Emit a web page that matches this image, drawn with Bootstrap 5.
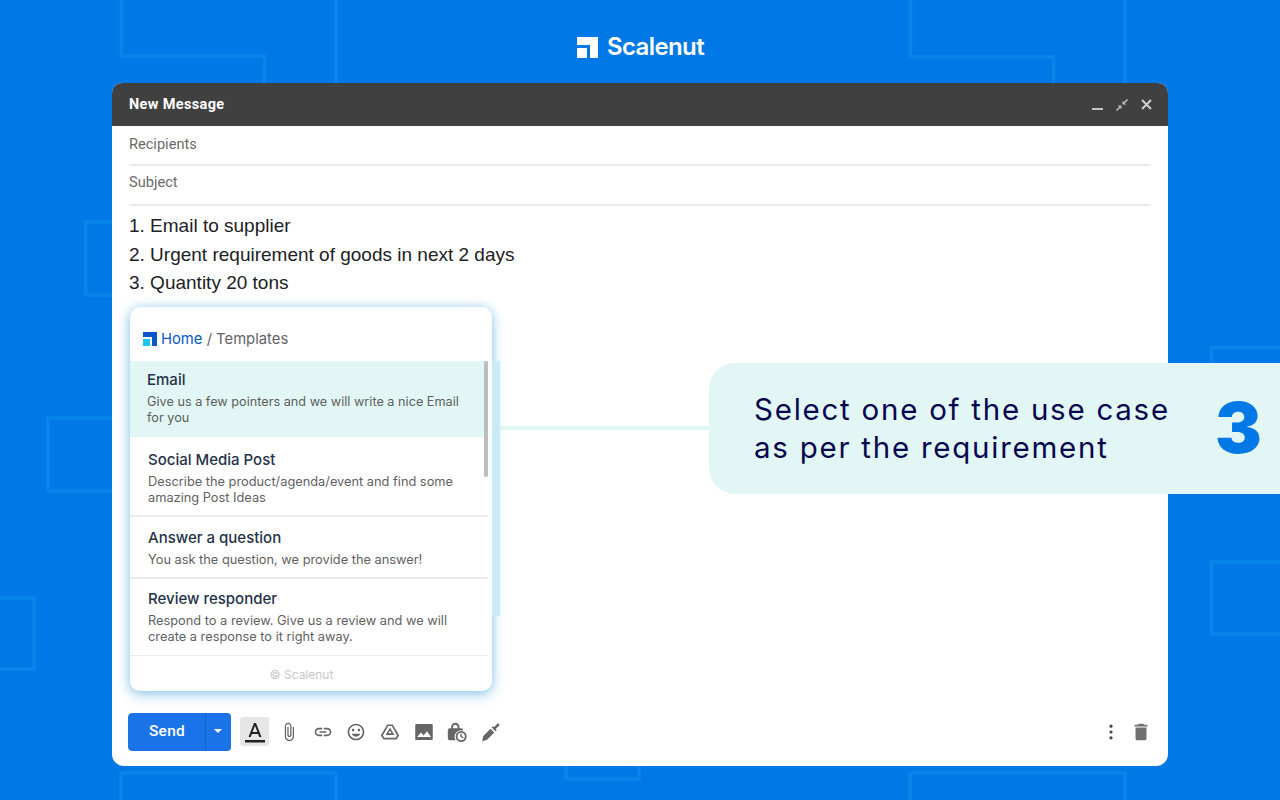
<!DOCTYPE html>
<html lang="en">
<head>
<meta charset="utf-8">
<title>Scalenut</title>
<link href="https://cdn.jsdelivr.net/npm/bootstrap@5.3.0/dist/css/bootstrap.min.css" rel="stylesheet">
<style>
html,body{height:100%}
body{width:1280px;height:800px;overflow:hidden;background:#0078e6;position:relative;font-family:"Roboto",sans-serif}
.bg-lines{position:absolute;left:0;top:0;width:1280px;height:800px;z-index:0}
.bg-lines path,.bg-lines rect{fill:none;stroke:#0885e9;stroke-width:3.5}
.brand-bar{height:83px;position:relative;z-index:1;padding:11px 0 0 1px}
.brand-name{font-family:"Inter",sans-serif;font-weight:600;font-size:24px;line-height:1;color:#fff;letter-spacing:-.6px;margin-left:9px}
.mail-win{position:relative;z-index:1;width:1056px;height:683px;margin:0 auto;background:#fff;border-radius:10px 10px 12px 12px;overflow:hidden}
.mail-head{height:43px;background:#404040;padding:0 15px 0 17px;color:#fff;font-weight:700;font-size:14.5px;letter-spacing:.35px}
.mail-field{margin:0 17px;font-size:14.600px;color:#6a6a6a;border-bottom:2px solid #ebebeb}
.f-one{height:40px;padding-top:8px}
.f-two{height:40px;padding-top:6px}
.mail-body{margin:6px 0 0 17px;font-family:"Liberation Sans",sans-serif;font-size:19px;line-height:28.5px;color:#202124}
.tpl-pop{position:relative;width:362px;height:384px;margin:9px 0 0 18px;background:#fff;border-radius:10px;box-shadow:0 4px 14px rgba(40,150,215,.42),0 0 8px rgba(60,170,225,.3);font-family:"Inter",sans-serif}
.tpl-pop::after{content:"";position:absolute;left:362px;top:54px;width:8px;height:255px;background:#c9eaf7}
.tpl-crumb{height:54px;padding:11px 0 0 13px;font-size:14.8px;line-height:29px;color:#5f6368}
.tpl-crumb a{color:#0a57c9;text-decoration:none}
.tpl-list{position:relative;width:358px;--bs-list-group-border-width:0;--bs-list-group-border-radius:0}
.tpl-list .list-group-item{padding:10px 19px 0 18px;border:0;border-bottom:2px solid #ebebeb;color:#5f5f5f;font-size:12.8px;line-height:16px;background:transparent}
.tpl-list .list-group-item.tpl-on{padding:9px 19px 0 17px;background:#e1f6f5;border-bottom:0;height:76px;font-size:12.7px}
.tpl-list h6{font-family:"Inter",sans-serif;font-size:15px;font-weight:500;line-height:20px;color:#243249;margin:0 0 4px}
.tpl-list .list-group-item.tpl-h1{height:80px;padding-top:13px}
.tpl-list .list-group-item.tpl-h2{height:62px;padding-top:11px}
.tpl-list .list-group-item.tpl-h3{height:77px;border-bottom-width:1px}
.tpl-bar{position:absolute;right:0;top:0;width:4px;height:116px;background:#b9bfc1;border-radius:2px}
.tpl-foot{font-size:12px;color:#c8c8c8;height:35px;line-height:37px;padding-right:19px}
.mail-tools{margin-top:22px;padding:0 16px 0 16px}
.send-grp .btn{--bs-btn-bg:#1a73e8;--bs-btn-border-color:#1a73e8;--bs-btn-hover-bg:#1a73e8;height:38px;color:#fff;border-radius:4px;font-weight:500;font-size:15.500px;letter-spacing:.3px;padding:0}
.send-main{width:78px}
.send-drop{width:26px;border-left-color:#1660c4!important}
.send-drop i{display:inline-block;border:4px solid transparent;border-top:4.5px solid #fff;border-bottom:0;vertical-align:middle;margin-top:-2px}
.t-ico{width:20px;height:20px;fill:#666;display:block}
.t-box{width:29px;height:29px;margin:0 0 0 9px;background:#e6e6e6;border-radius:3px}
.t-box svg{width:24px;height:24px;fill:#222}
.t-gap{gap:13.7px;margin-left:10px}
.pop-note{position:absolute;z-index:2;left:709px;top:363px;width:571px;height:131px;background:#e1f6f5;border-radius:26px 0 0 26px;padding:0 0 2px 45px}
.pop-note::before{content:"";position:absolute;left:-209px;top:63px;width:209px;height:4px;background:#e1f6f5}
.note-text{font-family:"Inter",sans-serif;font-size:29.500px;line-height:38px;letter-spacing:1.75px;color:#07074f}
.note-num{position:absolute;left:506px;top:0;height:129px;font-family:"Inter",sans-serif;font-weight:900;font-size:70px;line-height:129px;color:#0078e6}
</style>
</head>
<body>
<svg class="bg-lines" viewBox="0 0 1280 800" aria-hidden="true">
<path d="M121.500 0V56H264.500V90"/><path d="M336 0V90"/>
<path d="M910.500 0V57H1053.500V90"/><path d="M1125 0V90"/>
<rect x="85.500" y="222" width="80" height="73"/>
<rect x="48" y="418" width="90" height="73"/>
<rect x="-20" y="598" width="54" height="71"/>
<rect x="1211.500" y="347.500" width="100" height="72"/>
<rect x="1211.500" y="562" width="100" height="72"/>
<path d="M121 810V773H336V810"/><path d="M910 810V773H1125V810"/>
<rect x="566" y="750" width="73" height="29"/>
</svg>

<header class="brand-bar d-flex align-items-center justify-content-center">
<svg width="21" height="21" viewBox="0 0 21 21" fill="#fff" aria-hidden="true"><path d="M0 0H21V21H13V8H0Z"/><rect x="0" y="11" width="10" height="10"/></svg>
<span class="brand-name">Scalenut</span>
</header>

<main class="mail-win">
<div class="mail-head d-flex align-items-center justify-content-between">
<span>New Message</span>
<div class="d-flex align-items-center" style="gap:12px">
<svg width="12" height="12" viewBox="0 0 12 12" fill="#c4c4c4" aria-hidden="true"><rect x="0" y="9" width="11" height="2"/></svg>
<svg width="12" height="12" viewBox="0 0 12 12" fill="#c4c4c4" aria-hidden="true"><path d="M0 11L3.300 7.700 1.500 6.500H5.500V10.500L4.300 8.700 1 12ZM12 1L8.700 4.300 10.500 5.500H6.500V1.500L7.700 3.300 11 0Z"/></svg>
<svg width="13" height="13" viewBox="0 0 13 13" fill="none" stroke="#cfcfcf" stroke-width="2" aria-hidden="true"><path d="M2 2L11 11M11 2L2 11"/></svg>
</div>
</div>
<div class="mail-field f-one">Recipients</div>
<div class="mail-field f-two">Subject</div>
<div class="mail-body">1. Email to supplier<br>2. Urgent requirement of goods in next 2 days<br>3. Quantity 20 tons</div>

<section class="tpl-pop">
<div class="tpl-crumb d-flex align-items-center" style="gap:4px">
<svg width="14" height="14" viewBox="0 0 14 14" aria-hidden="true"><path fill="#0a57c9" d="M0 0H14V14H9V5H0Z"/><rect fill="#18c5f5" x="0" y="7" width="7" height="7"/></svg>
<span><a href="#">Home</a> / Templates</span>
</div>
<div class="tpl-list list-group">
<div class="list-group-item tpl-on"><h6>Email</h6>Give us a few pointers and we will write a nice Email for you</div>
<div class="list-group-item tpl-h1"><h6>Social Media Post</h6>Describe the product/agenda/event and find some amazing Post Ideas</div>
<div class="list-group-item tpl-h2"><h6>Answer a question</h6>You ask the question, we provide the answer!</div>
<div class="list-group-item tpl-h3"><h6>Review responder</h6>Respond to a review. Give us a review and we will create a response to it right away.</div>
<span class="tpl-bar"></span>
</div>
<div class="tpl-foot text-center">© Scalenut</div>
</section>

<div class="mail-tools d-flex align-items-center">
<div class="btn-group send-grp">
<button type="button" class="btn send-main">Send</button>
<button type="button" class="btn send-drop" aria-label="More send options"><i></i></button>
</div>
<div class="t-box d-flex align-items-center justify-content-center"><svg viewBox="0 0 24 24" aria-hidden="true"><path d="M2 20h20v2.500H2z"/><path d="M11 3L5.500 17h2.250l1.120-3h6.250l1.120 3h2.250L13 3h-2zm-1.380 9L12 5.670 14.380 12H9.620z"/></svg></div>
<div class="d-flex align-items-center t-gap">
<svg class="t-ico" viewBox="0 0 24 24" aria-hidden="true"><path d="M16.500 6v11.500c0 2.210-1.790 4-4 4s-4-1.790-4-4V5c0-1.380 1.120-2.500 2.500-2.500s2.500 1.120 2.500 2.500v10.500c0 .55-.45 1-1 1s-1-.45-1-1V6H10v9.500c0 1.380 1.120 2.500 2.500 2.500s2.500-1.120 2.500-2.500V5c0-2.210-1.790-4-4-4S7 2.790 7 5v12.500c0 3.040 2.460 5.500 5.500 5.500s5.500-2.460 5.500-5.500V6h-1.500z"/></svg>
<svg class="t-ico" viewBox="0 0 24 24" aria-hidden="true"><path d="M3.900 12c0-1.710 1.390-3.100 3.100-3.100h4V7H7c-2.760 0-5 2.240-5 5s2.240 5 5 5h4v-1.900H7c-1.710 0-3.100-1.390-3.100-3.100zM8 13h8v-2H8v2zm9-6h-4v1.900h4c1.710 0 3.100 1.390 3.100 3.100s-1.390 3.100-3.100 3.100h-4V17h4c2.760 0 5-2.240 5-5s-2.240-5-5-5z"/></svg>
<svg class="t-ico" viewBox="0 0 24 24" aria-hidden="true"><path d="M11.990 2C6.470 2 2 6.480 2 12s4.470 10 9.990 10C17.520 22 22 17.520 22 12S17.520 2 11.990 2zM12 20c-4.420 0-8-3.580-8-8s3.580-8 8-8 8 3.580 8 8-3.580 8-8 8zm3.500-9c.83 0 1.500-.67 1.500-1.500S16.330 8 15.500 8 14 8.670 14 9.500s.67 1.500 1.500 1.500zm-7 0c.83 0 1.500-.67 1.500-1.500S9.330 8 8.500 8 7 8.670 7 9.500 7.670 11 8.500 11zm3.500 6.500c2.330 0 4.310-1.460 5.110-3.500H6.890c.8 2.040 2.780 3.500 5.110 3.500z"/></svg>
<svg class="t-ico" viewBox="0 0 24 24" aria-hidden="true"><path fill-rule="evenodd" d="M8.700 3H15.300L23 16.300 19.700 21H4.300L1 16.300ZM12 6.500L6.800 15.500H17.200ZM9.900 4.900L3.400 16.200 5.400 19H18.600L20.600 16.200 14.100 4.900ZM12 10.300L13.900 13.600H10.100Z"/></svg>
<svg class="t-ico" viewBox="0 0 24 24" aria-hidden="true"><path d="M22.500 20V4c0-1-.6-1.500-1.500-1.500H3C2 2.500 1.500 3 1.500 4v16c0 1 .5 1.500 1.500 1.500h18c.9 0 1.500-.5 1.500-1.500zM8.500 12.500l3 3.600L15.500 11l5 7H3.500l5-5.500z"/></svg>
<svg class="t-ico" viewBox="0 0 24 24" aria-hidden="true"><path d="M5 7.500V6C5 3 7.200 1 10 1S15 3 15 6V7.500H17A2.500 2.500 0 0 1 19.500 10V10.300A7.800 7.800 0 0 0 10.500 22H3.500A2.500 2.500 0 0 1 1 19.500V10A2.500 2.500 0 0 1 3.500 7.500ZM7.300 7.500H12.700V6C12.700 4.300 11.600 3.200 10 3.200S7.300 4.300 7.300 6Z" fill-rule="evenodd"/><path fill-rule="evenodd" d="M17 10.800A6.600 6.600 0 1 1 17 24 6.600 6.600 0 0 1 17 10.800ZM17 13A4.400 4.400 0 1 0 17 21.800 4.400 4.400 0 0 0 17 13ZM16 14.200H17.800V17L20 18.300 19.200 19.700 16 17.800Z"/></svg>
<svg class="t-ico" viewBox="0 0 24 24" aria-hidden="true"><path d="M1.500 23L2.500 17 11.500 8 16 12.500 7 21.500ZM12.800 6.700L17.300 11.200 19 9.500 17.700 8.200 22.500 3.700 20.300 1.500 15.700 6.100 14.500 5Z"/></svg>
</div>
<div class="ms-auto d-flex align-items-center" style="gap:9px">
<svg width="20" height="20" viewBox="0 0 24 24" fill="#444" aria-hidden="true"><circle cx="12" cy="5" r="1.900"/><circle cx="12" cy="12" r="1.900"/><circle cx="12" cy="19" r="1.900"/></svg>
<svg width="22" height="22" viewBox="0 0 24 24" fill="#707070" aria-hidden="true"><path d="M6 19c0 1.100.9 2 2 2h8c1.100 0 2-.9 2-2V7H6v12zM19 4h-3.500l-1-1h-5l-1 1H5v2h14V4z"/></svg>
</div>
</div>
</main>

<aside class="pop-note d-flex align-items-center">
<div class="note-text">Select one of the use case<br>as per the requirement</div>
<div class="note-num">3</div>
</aside>
<script src="https://cdn.jsdelivr.net/npm/bootstrap@5.3.0/dist/js/bootstrap.bundle.min.js"></script>
</body>
</html>
